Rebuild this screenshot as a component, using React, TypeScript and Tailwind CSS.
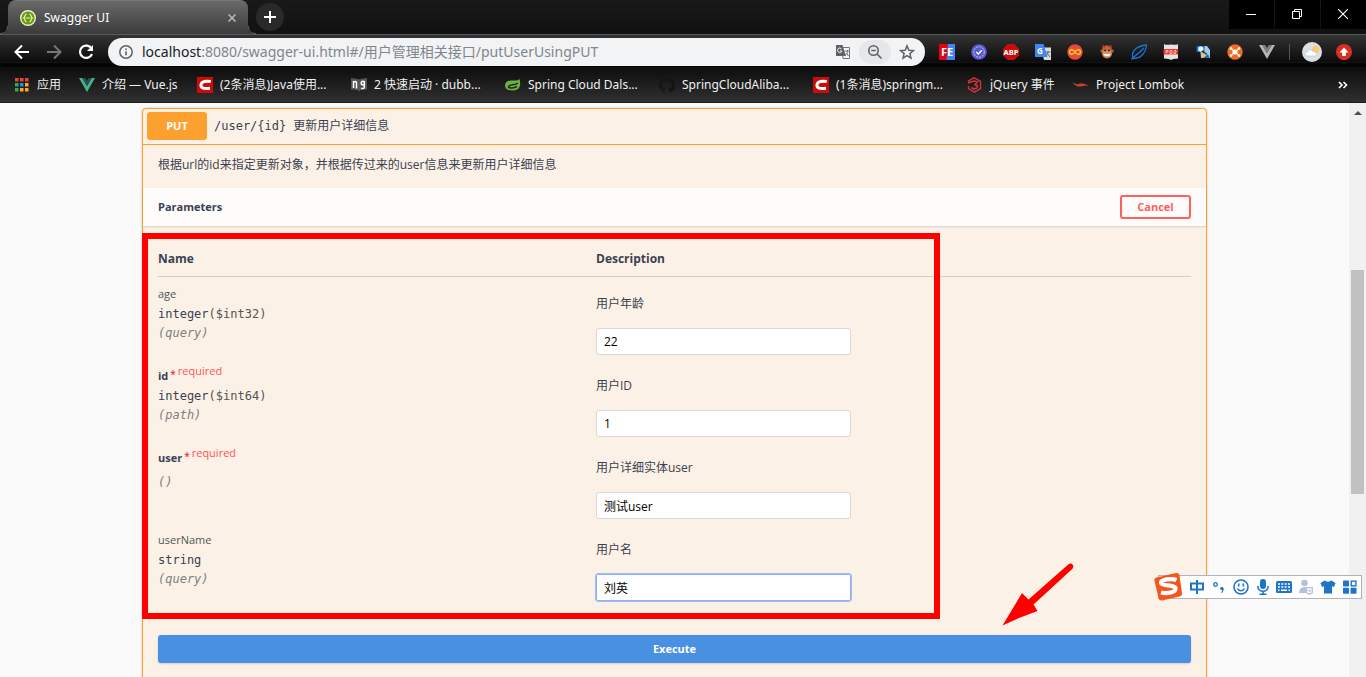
import React from "react";
import type { ReactNode } from "react";

const TabCorner = ({ flip = false }: { flip?: boolean }) => (
  <svg viewBox="0 0 8 34" className={flip ? "h-[34px] w-2 -scale-x-100" : "h-[34px] w-2"} aria-hidden="true">
    <path d="M0 34C5 34 8 32 8 26V34Z" fill="#3e3e3e" />
    <path d="M0 33.5C5 33.5 7.500 31 7.500 26" fill="none" stroke="#666" />
  </svg>
);

const SwaggerIcon = () => (
  <svg viewBox="0 0 16 16" className="size-4 shrink-0" aria-hidden="true">
    <circle cx="8" cy="8" r="7.300" fill="#6a9a08" stroke="#e6f2d2" strokeWidth="1.400" />
    <path d="M6.500 4.200C4.500 4.200 5.200 7.300 3.700 8c1.500.7.8 3.800 2.800 3.800M9.500 4.200c2 0 1.300 3.100 2.800 3.800-1.500.7-.8 3.800-2.800 3.800M5.500 8h5" fill="none" stroke="#e6f2d2" strokeWidth="1.200" />
  </svg>
);

const CsdnIcon = () => (
  <svg viewBox="0 0 16 16" className="size-4" aria-hidden="true">
    <path d="M0 0h16v16H0z" fill="#cb0b0b" />
    <path d="M13.800 4.600c-5-.9-9-.6-9.800 3-.7 3.800 3.500 4.300 9 3.700" fill="none" stroke="#fff" strokeWidth="3" />
  </svg>
);

const AppsIcon = () => (
  <svg viewBox="0 0 16 16" className="size-4" aria-hidden="true">
    <path d="M1 1h3.500v3.500H1zM6 1h3.500v3.500H6zM11 1h3.500v3.500H11z" fill="#ea4335" />
    <path d="M1 6h3.500v3.500H1zM1 11h3.500v3.500H1z" fill="#34a853" />
    <path d="M6 6h3.500v3.500H6z" fill="#1a8cff" />
    <path d="M11 6h3.500v3.500H11zM6 11h3.500v3.500H6zM11 11h3.500v3.500H11z" fill="#fbab18" />
  </svg>
);

const VueIcon = ({ outer, inner }: { outer: string; inner: string }) => (
  <svg viewBox="0 0 16 16" className="size-4" aria-hidden="true">
    <path d="M0 1h3.300L8 9l4.700-8H16L8 15Z" fill={outer} />
    <path d="M3.200 1h3L8 4l1.800-3h3L8 9.200Z" fill={inner} />
  </svg>
);

const BookIcon = () => (
  <svg viewBox="0 0 16 16" className="size-4" aria-hidden="true">
    <path d="M0 1l7 1 1 .8 1-.8 7-1v11.500L9.500 13 8 14.500 6.500 13 0 12.500Z" fill="#555" />
    <path d="M2.500 11V4M2.500 5.500c2-2 3-.5 3 .5v5.500M13.300 4v6.500c0 1-2 1.500-3 .7M13 4.500c-2-.5-2.800 0-2.800 1.800s2 2 3 .7" fill="none" stroke="#fff" strokeWidth="1.500" />
  </svg>
);

const SpringIcon = () => (
  <svg viewBox="0 0 16 16" className="size-4" aria-hidden="true">
    <path d="M14.500 2C16 7 15.500 13.500 8 13.500 3 13.500 0 12 0 8.500 0 4.500 4 3 8 3.500c3 .3 5 0 6.500-1.500Z" fill="#6db33f" />
    <path d="M13 6C10 9 4 6.500 3.500 10c1 1.700 5.500 1 8.500-.5" fill="none" stroke="#252525" strokeWidth="1.600" />
  </svg>
);

const GithubIcon = () => (
  <svg viewBox="0 0 16 16" className="size-4" aria-hidden="true">
    <path fill="#151515" d="M8 0C3.580 0 0 3.580 0 8c0 3.540 2.290 6.530 5.470 7.590.4.070.55-.17.55-.38v-1.490c-2.010.37-2.530-.49-2.690-.94-.09-.23-.48-.94-.82-1.130-.28-.15-.68-.52-.01-.53.63-.01 1.080.58 1.230.82.720 1.210 1.870.87 2.330.66.070-.52.28-.87.51-1.070-1.780-.2-3.640-.89-3.640-3.950 0-.87.31-1.590.82-2.150-.08-.2-.36-1.020.08-2.120 0 0 .67-.21 2.200.82.640-.18 1.320-.27 2-.27s1.360.09 2 .27c1.530-1.040 2.200-.82 2.200-.82.440 1.100.16 1.920.08 2.120.51.56.82 1.270.82 2.150 0 3.070-1.870 3.750-3.650 3.950.29.25.54.73.54 1.480v2.200c0 .21.15.46.55.38A8.010 8.010 0 0 0 16 8c0-4.420-3.580-8-8-8Z" />
  </svg>
);

const HexThreeIcon = () => (
  <svg viewBox="0 0 16 16" className="size-4" aria-hidden="true">
    <path d="M1.500 5V3.800L7 .8l6.500 3.400v7.400L7.500 15.200l-6-3.500V9" fill="none" stroke="#c8353c" strokeWidth="1.400" />
    <path d="M1 6 7 4l3.500 1L8 7.500 10.500 9 10 11l-3 1-2.500-1.500" fill="none" stroke="#c8353c" strokeWidth="1.600" />
  </svg>
);

const ChiliIcon = () => (
  <svg viewBox="0 0 16 16" className="size-4" aria-hidden="true">
    <path d="M1 6.300c1 1.200 2.500 1.200 4.500.7 4-1 7.500 0 10 2-4-.8-6.500.7-10 .5C3 9.400 1.500 8.400 1 6.300Z" fill="#c8412f" />
    <path d="M.3 5.500 1.200 7l2.300.3" fill="none" stroke="#6d6a2c" />
  </svg>
);

const bookmarks: { label: string; width: string; icon: ReactNode }[] = [
  { label: "应用", width: "w-[25px]", icon: <AppsIcon /> },
  { label: "介绍 — Vue.js", width: "w-[78px]", icon: <VueIcon outer="#41b883" inner="#35495e" /> },
  { label: "(2条消息)Java使用...", width: "w-[114px]", icon: <CsdnIcon /> },
  { label: "2 快速启动 · dubb...", width: "w-[114px]", icon: <BookIcon /> },
  { label: "Spring Cloud Dals...", width: "w-[114px]", icon: <SpringIcon /> },
  { label: "SpringCloudAliba...", width: "w-[114px]", icon: <GithubIcon /> },
  { label: "(1条消息)springm...", width: "w-[114px]", icon: <CsdnIcon /> },
  { label: "jQuery 事件", width: "w-[66px]", icon: <HexThreeIcon /> },
  { label: "Project Lombok", width: "w-24", icon: <ChiliIcon /> },
];

const extensions: { name: string; icon: ReactNode }[] = [
  {
    name: "FE helper",
    icon: (
      <>
        <path d="M0 0h9v16H0z" fill="#e60012" />
        <path d="M9 0h7v16H7.500Z" fill="#3f86f0" />
        <text x="8" y="12" textAnchor="middle" fontSize="11" fontWeight="700" fill="#fff">FE</text>
      </>
    ),
  },
  {
    name: "Checker",
    icon: (
      <>
        <circle cx="8" cy="8" r="7.800" fill="#5b5bd0" />
        <circle cx="8" cy="8" r="5.300" fill="none" stroke="#c9c9f5" strokeDasharray="2 1" />
        <path d="m5.300 8 2 2 3.500-3.700" fill="none" stroke="#fff" strokeWidth="1.500" />
      </>
    ),
  },
  {
    name: "Ad blocker",
    icon: (
      <>
        <path d="M4.700 0h6.600L16 4.700v6.600L11.300 16H4.700L0 11.300V4.700Z" fill="#c70d0d" />
        <text x="8" y="10.800" textAnchor="middle" fontSize="7.500" fontWeight="700" fill="#fff">ABP</text>
      </>
    ),
  },
  {
    name: "Translate",
    icon: (
      <>
        <path d="M6 3.500h10V16H9Z" fill="#d9dce0" />
        <path d="M0 0h8.500l4 13H0Z" fill="#4285f4" />
        <text x="4.800" y="9.500" textAnchor="middle" fontSize="8" fontWeight="700" fill="#fff">G</text>
        <path d="M10.500 8h5M13 7v1c0 2-1 3-2 4M12 9l3 4" fill="none" stroke="#667" />
      </>
    ),
  },
  {
    name: "Infinity",
    icon: (
      <>
        <circle cx="8" cy="8" r="7.700" fill="#e64a3c" />
        <path d="M8 8C6.500 5 2.500 4.800 2.500 8S6.500 11 8 8s5.500-3.200 5.500 0S9.500 11 8 8Z" fill="none" stroke="#ffc527" strokeWidth="1.600" />
      </>
    ),
  },
  {
    name: "Monkey",
    icon: (
      <>
        <circle cx="3" cy="7" r="1.800" fill="#a96039" />
        <circle cx="13" cy="7" r="1.800" fill="#a96039" />
        <path d="M3.500 3c2-2 7-2 9 0l.5 7c-1 6-9 6-10 0Z" fill="#b4683f" />
        <path d="M4 6.500h8l.5 4c-1 4-8 4-9 0Z" fill="#dc9467" />
        <path d="M4.500 10h7c-.5 3-6.500 3-7 0Z" fill="#fff" />
        <path d="M5 5.800l2 1.300M11 5.800 9 7.100" stroke="#6b1d15" strokeWidth="1.500" />
        <path d="m3.500 1.500 2.500 1.500M12.500 1.500 10 3" stroke="#c9291b" strokeWidth="1.500" />
      </>
    ),
  },
  {
    name: "Feather",
    icon: (
      <path d="M.3 15.500C4 12 9 8 13 4M2 14.500C-.5 7 6 2 15.500 1 15 9 10 14.500 2 14.500Z" fill="none" stroke="#1976d2" strokeWidth="1.300" />
    ),
  },
  {
    name: "Reader",
    icon: (
      <>
        <path d="M1 0c2 1.500 4 .5 7 .5s5 1 7-.5v14.500c-4 .5-6 .5-7 1.500-1-1-3-1-7-1.500Z" fill="#e4e4e4" />
        <path d="M.5 5h14.500v5.500H.5z" fill="#e33b32" />
        <path d="M3 9.500V6.500h2V8H3M7 9.500v-3h2v3H7M11 6.500h2V8h-2v1.500h2" fill="none" stroke="#ffc9c4" strokeWidth=".8" />
      </>
    ),
  },
  {
    name: "Search helper",
    icon: (
      <>
        <path d="M5 2h7l3 4v8H6Z" fill="#9dcbf3" />
        <path d="M1.500 2h8v6h-8z" fill="#1765cb" />
        <circle cx="5.800" cy="5" r="2.700" fill="#e3f2ff" />
        <path d="m7 7 4.500 3.500" stroke="#443b29" strokeWidth="2" />
        <path d="m6 12 3-3 2 2-2.500 3Z" fill="#ffc42c" />
        <path d="m9.500 13 3.500-3 1.500 4H8Z" fill="#1a6bd1" />
      </>
    ),
  },
  {
    name: "Network",
    icon: (
      <>
        <circle cx="8" cy="8" r="7.700" fill="#f26b21" />
        <circle cx="8" cy="8" r="2.500" fill="#fff" />
        <path d="m4 4.500 8 7M12 4.500l-8 7" stroke="#fff" strokeWidth="1.100" />
        <circle cx="4" cy="4.500" r="1.300" fill="#fff" />
        <circle cx="12" cy="4.500" r="1.300" fill="#fff" />
        <circle cx="4" cy="11.500" r="1.300" fill="#fff" />
        <circle cx="12" cy="11.500" r="1.300" fill="#fff" />
      </>
    ),
  },
  {
    name: "Vue devtools",
    icon: (
      <>
        <path d="M0 1h3.300L8 9l4.700-8H16L8 15Z" fill="#b5b5b5" />
        <path d="M3.200 1h3L8 4l1.800-3h3L8 9.200Z" fill="#808080" />
      </>
    ),
  },
];

function TabStrip() {
  return (
    <div className="flex h-[34px] items-start justify-between bg-gradient-to-b from-[#191919] to-[#111]">
      <div className="flex">
        <TabCorner />
        <div className="flex h-[34px] w-[240px] items-center rounded-t-lg border-t border-[#777] bg-gradient-to-b from-[#6a6a6a] to-[#3b3b3b] pr-2 pl-3 text-[12px] text-white">
          <SwaggerIcon />
          <span className="ml-2 flex-1">Swagger UI</span>
          <button type="button" aria-label="Close tab" className="flex size-4 items-center justify-center">
            <svg viewBox="0 0 8 8" className="size-2" aria-hidden="true"><path d="m.5.5 7 7m0-7-7 7" stroke="#bbb" strokeWidth="1.500" /></svg>
          </button>
        </div>
        <TabCorner flip />
        <button type="button" aria-label="New tab" className="mt-[3px] flex size-7 items-center justify-center rounded-full bg-[#292929]">
          <svg viewBox="0 0 12 12" className="size-3" aria-hidden="true"><path d="M6 0v12M0 6h12" stroke="#fff" strokeWidth="2" /></svg>
        </button>
      </div>
      <div className="flex gap-px">
        <button type="button" aria-label="Minimize" className="flex h-[29px] w-[45px] items-center justify-center bg-black pr-0.5">
          <svg viewBox="0 0 10 10" className="size-2.5" aria-hidden="true"><path d="M0 4.500h10" stroke="#fff" /></svg>
        </button>
        <button type="button" aria-label="Restore" className="flex h-[29px] w-[45px] items-center justify-center bg-black pr-0.5 pb-0.5">
          <svg viewBox="0 0 10 10" className="size-2.5" aria-hidden="true"><path d="M.5 2.500h7v7h-7zM2.500 2.500v-2h7v7h-2" fill="none" stroke="#fff" /></svg>
        </button>
        <button type="button" aria-label="Close" className="flex h-[29px] w-[45px] items-center justify-center bg-black pr-0.5 pb-0.5">
          <svg viewBox="0 0 10 10" className="size-2.5" aria-hidden="true"><path d="m0 0 10 10M10 0 0 10" stroke="#fff" strokeWidth="1.100" /></svg>
        </button>
      </div>
    </div>
  );
}

function Toolbar() {
  return (
    <div className="flex h-[33px] items-center border-t border-[#5a5a5a] bg-[linear-gradient(#333_0,#0b0b0b_27px,#222_27px,#050505_28px)] px-1.5 pt-0.5">
      <button type="button" aria-label="Back" className="flex w-8 justify-center">
        <svg viewBox="0 0 16 16" className="size-4" fill="none" stroke="#fff" strokeWidth="2" aria-hidden="true"><path d="M15 8H2M8 1.500 1.500 8 8 14.500" /></svg>
      </button>
      <button type="button" aria-label="Forward" className="flex w-8 justify-center">
        <svg viewBox="0 0 16 16" className="size-4" fill="none" stroke="#777" strokeWidth="2" aria-hidden="true"><path d="M1 8h13M8 1.500 14.500 8 8 14.500" /></svg>
      </button>
      <button type="button" aria-label="Reload" className="flex w-8 justify-center">
        <svg viewBox="0 0 16 16" className="size-4" aria-hidden="true">
          <path d="M13.500 4.500A6.200 6.200 0 1 0 14 10" fill="none" stroke="#fff" strokeWidth="2.200" />
          <path d="M15 1v6H9Z" fill="#fff" />
        </svg>
      </button>
      <div className="relative z-10 mx-1.5 flex h-7 flex-1 items-center rounded-full bg-[#f1f3f4] pr-0.5 pl-2.5">
        <svg viewBox="0 0 16 16" className="mr-2 size-4" aria-hidden="true">
          <circle cx="8" cy="8" r="6.200" fill="none" stroke="#5f6368" strokeWidth="1.500" />
          <path d="M8 7.300v4M8 4.500v1.600" stroke="#5f6368" strokeWidth="1.600" />
        </svg>
        <div className="flex-1 text-[14px] leading-5 whitespace-nowrap text-[#80868b]">
          <span className="text-[#202124]">localhost</span>:8080/swagger-ui.html#/用户管理相关接口/putUserUsingPUT
        </div>
        <button type="button" aria-label="Translate page" className="flex w-8 justify-center">
          <svg viewBox="0 0 16 16" className="size-4" aria-hidden="true">
            <path d="M6.500 3.500H14.500v11H8Z" fill="none" stroke="#72767b" />
            <path d="M1 1h6.500L11 12H1Z" fill="#5f6368" />
            <path d="M6.500 5a2.200 2.200 0 1 0 .3 2H5" fill="none" stroke="#f1f3f4" />
            <path d="M10 7h4M12.500 6v1c0 2-1 3-2 4M11.500 9l2 3" fill="none" stroke="#72767b" />
          </svg>
        </button>
        <button type="button" aria-label="Zoom" className="flex h-6 w-8 items-center justify-center rounded-full bg-[#e5e7e9]">
          <svg viewBox="0 0 16 16" className="size-4" fill="none" stroke="#5f6368" strokeWidth="1.600" aria-hidden="true">
            <circle cx="6.500" cy="6.500" r="4.700" /><path d="m10 10 4.500 4.500M4.300 6.500h4.500" />
          </svg>
        </button>
        <button type="button" aria-label="Bookmark" className="flex w-8 justify-center">
          <svg viewBox="0 0 16 16" className="size-4" fill="none" stroke="#5f6368" strokeWidth="1.500" aria-hidden="true">
            <path d="m8 1.800 1.800 4.400 4.700.4-3.600 3 1.100 4.600L8 11.700l-4 2.500 1.100-4.600-3.600-3 4.700-.4Z" />
          </svg>
        </button>
      </div>
      {extensions.map((e) => (
        <button type="button" key={e.name} aria-label={e.name} className="flex w-8 justify-center">
          <svg viewBox="0 0 16 16" className="size-4" aria-hidden="true">{e.icon}</svg>
        </button>
      ))}
      <div className="mx-1.5 h-4 w-px bg-[#555]" />
      <button type="button" aria-label="Profile" className="flex w-8 justify-center">
        <svg viewBox="0 0 20 20" className="size-5" aria-hidden="true">
          <circle cx="10" cy="10" r="10" fill="#dedede" />
          <circle cx="13.500" cy="7.500" r="3.500" fill="#ffc766" />
          <path d="M5 14c-3-.5-2-4 .5-4 .5-3 4.500-3 5-.5 2-1 3.500.5 3 1.500 2 .5 1.500 3-.5 3Z" fill="#fff" stroke="#a9d0f3" strokeWidth=".8" />
        </svg>
      </button>
      <button type="button" aria-label="Update" className="flex w-8 justify-center">
        <svg viewBox="0 0 16 16" className="size-4" aria-hidden="true">
          <circle cx="8" cy="8" r="8" fill="#d93025" />
          <path d="m8 3.500 4.500 5h-2.700V12H6.200V8.500H3.500Z" fill="#fff" />
        </svg>
      </button>
    </div>
  );
}

function BookmarkBar() {
  return (
    <nav className="flex h-9 items-center gap-[17px] border-b border-[#1c1c1c] bg-gradient-to-b from-[#0d0d0d] to-[#303030] pr-[15px] pl-3.5 text-[12px] text-[#f0f0f0]">
      {bookmarks.map((b, i) => (
        <a key={i} href="#" className="flex items-center gap-[7px]">
          {b.icon}
          <span className={`${b.width} whitespace-nowrap`}>{b.label}</span>
        </a>
      ))}
      <button type="button" aria-label="More bookmarks" className="ml-auto flex w-4 justify-center">
        <svg viewBox="0 0 10 8" className="h-2 w-2.5" fill="none" stroke="#fff" strokeWidth="1.600" aria-hidden="true"><path d="m1 1 3 3-3 3M5.500 1l3 3-3 3" /></svg>
      </button>
    </nav>
  );
}

type Param = {
  name: string;
  required?: boolean;
  type?: string;
  format?: string;
  place: string;
  description: string;
  value: string;
  active?: boolean;
};

const params: Param[] = [
  { name: "age", type: "integer", format: "($int32)", place: "(query)", description: "用户年龄", value: "22" },
  { name: "id", required: true, type: "integer", format: "($int64)", place: "(path)", description: "用户ID", value: "1" },
  { name: "user", required: true, place: "()", description: "用户详细实体user", value: "测试user" },
  { name: "userName", type: "string", place: "(query)", description: "用户名", value: "刘英", active: true },
];

const mono = "font-['DejaVu_Sans_Mono','Liberation_Mono',monospace]";

function ParamRow({ p }: { p: Param }) {
  return (
    <tr className="h-[82px] align-top">
      <td className="pt-2">
        <div className={p.required ? "flex h-[18px] items-center text-[11px] font-bold" : "flex h-[18px] items-center text-[11px] text-[#555]"}>
          {p.name}
          {p.required && (
            <span className="flex pb-2 font-normal text-[#ff5555]">
              <span className="mx-0.5 pt-1 text-[10px] text-red-600">*</span>required
            </span>
          )}
        </div>
        {p.type && (
          <div className={`${mono} mt-0.5 text-[12px] leading-[18px]`}>
            {p.type}<span className="text-[#555]">{p.format}</span>
          </div>
        )}
        <div className={`${mono} ${p.type ? "mt-px" : "mt-1.5"} text-[12px] leading-[18px] text-[#808080] italic`}>{p.place}</div>
      </td>
      <td className="pt-[18px]">
        <label htmlFor={`param-${p.name}`} className="block text-[12px] leading-[18px]">{p.description}</label>
        <input
          id={`param-${p.name}`}
          type="text"
          defaultValue={p.value}
          className={
            p.active
              ? "mt-[15px] block h-[27px] w-[255px] rounded-xs border border-[#8fb2f0] bg-white px-[7px] text-[12px] text-black outline outline-[#9dbdf2]"
              : "mt-[15px] block h-[27px] w-[255px] rounded-[3px] border border-[#d9d9d9] bg-white px-[7px] text-[12px] text-black"
          }
        />
      </td>
    </tr>
  );
}

function Operation() {
  return (
    <section className="mx-auto mt-[5px] w-full max-w-[1065px] rounded border border-[#fca130] bg-[#fbf1e6] pb-10 text-[#3b4151] shadow-[0_0_3px_rgba(0,0,0,0.19)]">
      <header className="flex h-9 items-center border-b border-[#fca130] pb-px pl-1">
        <span className="flex h-7 w-[60px] items-center justify-center rounded-[3px] bg-[#fca130] text-[11px] font-bold text-white">PUT</span>
        <span className={`${mono} ml-[7px] text-[12px]`}>/user/&#123;id&#125;</span>
        <span className="ml-[7px] text-[12px]">更新用户详细信息</span>
      </header>
      <p className="px-[15px] pt-[11px] pb-3.5 text-[12px] leading-[18px]">根据url的id来指定更新对象，并根据传过来的user信息来更新用户详细信息</p>
      <div className="flex h-[38px] items-center justify-between bg-[#fefcfa] px-[15px] shadow-[0_1px_2px_rgba(0,0,0,0.15)]">
        <h4 className="text-[11px] font-bold">Parameters</h4>
        <button type="button" className="h-6 w-[71px] rounded-[3px] border-2 border-[#ff6060] pb-px text-[11px] leading-none font-bold text-[#ff6060]">Cancel</button>
      </div>
      <div className="relative px-[15px] pt-5">
        <table className="w-full table-fixed border-separate border-spacing-0 text-left">
          <thead>
            <tr className="h-[31px] text-[12px]">
              <th className="w-[438px] border-b border-[#d5cecb] pb-1 font-bold">Name</th>
              <th className="border-b border-[#d5cecb] pb-1 font-bold">Description</th>
            </tr>
          </thead>
          <tbody>
            {params.map((p) => <ParamRow key={p.name} p={p} />)}
          </tbody>
        </table>
        <button type="button" className="mt-[30px] block h-7 w-full rounded-[3px] bg-[#4990e2] text-[11px] font-bold text-white shadow-[0_1px_2px_rgba(0,0,0,0.15)]">Execute</button>
        <div className="pointer-events-none absolute top-[7px] -left-px h-[386px] w-[798px] border-6 border-[#ff0000]" />
        <svg viewBox="0 0 74 66" className="pointer-events-none absolute top-[336px] right-[130px] h-[66px] w-[74px]" aria-hidden="true">
          <path d="M66.500 2.200c3-2.200 6.500 1.600 4 4.500L31.500 42.500l4 6.500L17 56 .5 63.500 20 31l6.500 6.500Z" fill="#ff0000" />
        </svg>
      </div>
    </section>
  );
}

function ImeBar() {
  return (
    <div className="absolute right-1 bottom-[78px] z-20 flex h-6 w-[204px] items-center border border-[#aeb4bd] bg-white pl-[27px] text-[#1f74c8]">
      <svg viewBox="0 0 30 30" className="absolute -top-1 -left-1.5 size-[30px]" aria-hidden="true">
        <path d="M3.500 5.500 23 1c2-.3 3 .3 3.500 2.500L29 21c.2 2-.5 3-2.500 3.500L9 28.500c-2 .2-3-.5-3.500-3L1.500 9c-.3-2 .2-3.200 2-3.500Z" fill="#f5561f" />
        <path d="M23.500 8c-5-2-16-.5-15.500 3C8.500 14.500 22 12 22.500 16.500c.3 4-8 5.500-14.500 4" fill="none" stroke="#fff" strokeWidth="4.200" />
      </svg>
      <div className="flex flex-1 items-center justify-around">
        <svg viewBox="0 0 16 16" className="size-4" fill="none" stroke="currentColor" strokeWidth="2" aria-hidden="true"><path d="M2 4.500h12v6H2zM8 1v14" /></svg>
        <svg viewBox="0 0 16 16" className="size-4" aria-hidden="true">
          <circle cx="4.500" cy="5.500" r="1.800" fill="none" stroke="currentColor" strokeWidth="1.300" />
          <path d="M9.500 8.500c2.500-1.500 5 1.500 1.500 5.500l-1-.5c1-1 1.300-1.700 1-2.500-1.500.3-2.500-1.500-1.500-2.500Z" fill="currentColor" />
        </svg>
        <svg viewBox="0 0 16 16" className="size-4" fill="none" stroke="currentColor" strokeWidth="1.600" aria-hidden="true"><circle cx="8" cy="8" r="7" /><path d="M5.700 4.500v3M10.300 4.500v3M4.500 9.500c1.500 3 5.500 3 7 0" /></svg>
        <svg viewBox="0 0 16 16" className="size-4" aria-hidden="true">
          <rect x="5" y="0" width="6" height="10" rx="3" fill="currentColor" />
          <path d="M2.800 7c0 7 10.400 7 10.400 0M8 12v3M4.500 15.200h7" fill="none" stroke="currentColor" strokeWidth="1.600" />
        </svg>
        <svg viewBox="0 0 16 16" className="size-4" aria-hidden="true">
          <rect y="2" width="16" height="12" rx="1.500" fill="currentColor" />
          <path d="M2 5h12M2 8h12" stroke="#fff" strokeWidth="1.500" strokeDasharray="2 1.300" />
          <path d="M2 11.200h1.500M5 11.200h6M12.500 11.200H14" stroke="#fff" strokeWidth="1.500" />
        </svg>
        <svg viewBox="0 0 16 16" className="size-4" fill="#b6c2d8" aria-hidden="true">
          <circle cx="6.500" cy="4" r="3.300" /><path d="M1 14c0-8 11-8 11 0Z" />
          <path d="M8.700 8.700h5.600v5c-2 1.800-3.600 1.800-5.600 0Z" fill="#fff" stroke="#b6c2d8" strokeWidth="1.300" /><path d="M10.700 10.700h2v2h-2z" />
        </svg>
        <svg viewBox="0 0 16 16" className="size-4" fill="currentColor" aria-hidden="true"><path d="M4.500 1.500c2 1.500 5 1.500 7 0L15.500 4 14 8l-2-.7v7.200H4V7.300L2 8 .5 4Z" /></svg>
        <svg viewBox="0 0 16 16" className="size-4" fill="currentColor" aria-hidden="true">
          <rect x="1" y="1.500" width="6" height="6" rx=".8" /><rect x="1" y="8.800" width="6" height="6" rx=".8" /><rect x="8.500" y="8.800" width="6" height="6" rx=".8" />
          <rect x="9.200" y="2.200" width="4.700" height="4.700" fill="none" stroke="currentColor" strokeWidth="1.400" />
        </svg>
      </div>
    </div>
  );
}

export default function App() {
  return (
    <div className="relative flex h-screen flex-col overflow-hidden bg-[#fafafa] font-['Open_Sans','Noto_Sans_CJK_SC',sans-serif]">
      <div className="shrink-0 font-['Noto_Sans','Noto_Sans_CJK_SC',sans-serif]">
        <TabStrip />
        <Toolbar />
        <BookmarkBar />
      </div>
      <div className="flex min-h-0 flex-1">
        <main className="min-w-0 flex-1 overflow-hidden">
          <Operation />
        </main>
        <div className="flex w-[17px] flex-col items-center bg-[#f1f1f1]" aria-hidden="true">
          <svg viewBox="0 0 8 4" className="mt-2 h-1 w-2"><path d="M4 0l4 4H0Z" fill="#505050" /></svg>
          <div className="mt-[155px] h-[224px] w-[13px] bg-[#c1c1c1]" />
        </div>
      </div>
      <ImeBar />
    </div>
  );
}
